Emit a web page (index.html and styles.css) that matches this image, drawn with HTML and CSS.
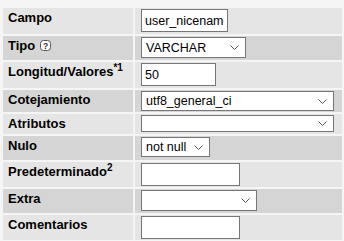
FILE: index.html
```html
<!DOCTYPE html>
<html lang="es">
<head>
    <meta charset="UTF-8">
    <title>Estructura de columna</title>
    <link rel="stylesheet" href="styles.css">
</head>
<body>
    <table class="field-table">
        <tr class="odd r-campo">
            <th>Campo</th>
            <td><input type="text" class="txt w-campo" value="user_nicename"></td>
        </tr>
        <tr class="even r-tipo">
            <th>Tipo <span class="help">
                <svg width="11" height="11" viewBox="0 0 11 11">
                    <rect x="0.5" y="0.5" width="10" height="10" rx="3" fill="#fff" stroke="#555"/>
                    <text x="5.5" y="8.6" text-anchor="middle" font-family="Liberation Sans, Arial, sans-serif" font-size="8.5" font-weight="bold" fill="#333">?</text>
                </svg></span></th>
            <td><select class="sel w-tipo h21"><option>VARCHAR</option></select></td>
        </tr>
        <tr class="odd r-long">
            <th>Longitud/Valores<sup>*1</sup></th>
            <td><input type="text" class="txt w-long" value="50"></td>
        </tr>
        <tr class="even r-cotej">
            <th>Cotejamiento</th>
            <td><select class="sel w-wide h20"><option>utf8_general_ci</option></select></td>
        </tr>
        <tr class="odd r-atrib">
            <th>Atributos</th>
            <td><select class="sel w-wide h17"><option></option></select></td>
        </tr>
        <tr class="even r-nulo">
            <th>Nulo</th>
            <td><select class="sel w-nulo h20"><option>not null</option></select></td>
        </tr>
        <tr class="odd r-pred">
            <th>Predeterminado<sup>2</sup></th>
            <td><input type="text" class="txt w-pred" value=""></td>
        </tr>
        <tr class="even r-extra">
            <th>Extra</th>
            <td><select class="sel w-extra h21"><option></option></select></td>
        </tr>
        <tr class="odd r-coment">
            <th>Comentarios</th>
            <td><input type="text" class="txt w-pred" value=""></td>
        </tr>
    </table>
</body>
</html>
```

FILE: styles.css
```css
body {
    margin: 0;
    padding: 6px 0 0 1px;
    background: #f5f5f5;
    font-family: "Liberation Sans", Arial, sans-serif;
    font-size: 13px;
    color: #000;
}
.field-table {
    border-collapse: separate;
    border-spacing: 2px;
    width: 343px;
}
.field-table th,
.field-table td {
    vertical-align: top;
    padding: 1px 5px;
    line-height: 16px;
}
.field-table th {
    width: 120px;
    text-align: left;
    font-weight: bold;
    padding-top: 2px;
    white-space: nowrap;
}
.field-table td {
    padding: 1px 6px;
}
.odd th, .odd td {
    background: #e5e5e5;
}
.even th, .even td {
    background: #d5d5d5;
}
sup {
    font-size: 10px;
    line-height: 0;
    vertical-align: 5px;
}
.help {
    display: inline-block;
    vertical-align: -1px;
    margin-left: 1px;
}
.help svg {
    display: block;
}

/* row heights */
.r-campo td { height: 24px; }
.r-tipo td { height: 22px; }
.r-long td { height: 24px; }
.r-cotej td { height: 20px; }
.r-atrib td { height: 18px; }
.r-nulo td { height: 22px; }
.r-pred td { height: 23px; }
.r-extra td { height: 22px; }
.r-coment td { height: 22px; }

.txt, .sel {
    display: block;
    box-sizing: border-box;
    margin: 0;
    border: 1px solid #767676;
    border-radius: 0;
    background-color: #fff;
    font-family: "Liberation Sans", Arial, sans-serif;
    font-size: 12.5px;
    color: #000;
    outline: none;
}
.txt {
    height: 23px;
    padding: 2px 3px;
}
.sel {
    appearance: none;
    -webkit-appearance: none;
    padding: 0 18px 0 4px;
    background-image: url("data:image/svg+xml;utf8,<svg xmlns='http://www.w3.org/2000/svg' width='9' height='5' viewBox='0 0 9 5'><path d='M0.5 0.5 L4.5 4.5 L8.5 0.5' fill='none' stroke='%23555' stroke-width='1'/></svg>");
    background-repeat: no-repeat;
    background-position: right 6px center;
}
.h21 { height: 21px; }
.h20 { height: 20px; }
.h17 { height: 17px; }

.w-campo { width: 87px; }
.w-tipo { width: 105px; }
.w-long { width: 75px; }
.w-wide { width: 193px; }
.w-nulo { width: 69px; }
.w-pred { width: 99px; }
.w-extra { width: 116px; }
```
